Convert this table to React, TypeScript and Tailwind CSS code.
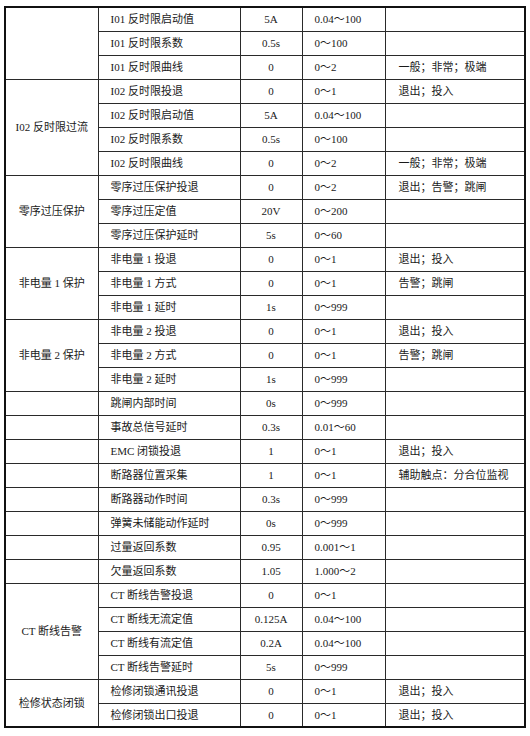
import React from 'react';

type Row = {
  group?: { label: string; span: number };
  name: string;
  value: string;
  range: string;
  note?: string;
};

const rows: Row[] = [
  { group: { label: '', span: 3 }, name: 'I01 反时限启动值', value: '5A', range: '0.04～100' },
  { name: 'I01 反时限系数', value: '0.5s', range: '0～100' },
  { name: 'I01 反时限曲线', value: '0', range: '0～2', note: '一般；非常；极端' },
  { group: { label: 'I02 反时限过流', span: 4 }, name: 'I02 反时限投退', value: '0', range: '0～1', note: '退出；投入' },
  { name: 'I02 反时限启动值', value: '5A', range: '0.04～100' },
  { name: 'I02 反时限系数', value: '0.5s', range: '0～100' },
  { name: 'I02 反时限曲线', value: '0', range: '0～2', note: '一般；非常；极端' },
  { group: { label: '零序过压保护', span: 3 }, name: '零序过压保护投退', value: '0', range: '0～2', note: '退出；告警；跳闸' },
  { name: '零序过压定值', value: '20V', range: '0～200' },
  { name: '零序过压保护延时', value: '5s', range: '0～60' },
  { group: { label: '非电量 1 保护', span: 3 }, name: '非电量 1 投退', value: '0', range: '0～1', note: '退出；投入' },
  { name: '非电量 1 方式', value: '0', range: '0～1', note: '告警；跳闸' },
  { name: '非电量 1 延时', value: '1s', range: '0～999' },
  { group: { label: '非电量 2 保护', span: 3 }, name: '非电量 2 投退', value: '0', range: '0～1', note: '退出；投入' },
  { name: '非电量 2 方式', value: '0', range: '0～1', note: '告警；跳闸' },
  { name: '非电量 2 延时', value: '1s', range: '0～999' },
  { group: { label: '', span: 1 }, name: '跳闸内部时间', value: '0s', range: '0～999' },
  { group: { label: '', span: 1 }, name: '事故总信号延时', value: '0.3s', range: '0.01～60' },
  { group: { label: '', span: 1 }, name: 'EMC 闭锁投退', value: '1', range: '0～1', note: '退出；投入' },
  { group: { label: '', span: 1 }, name: '断路器位置采集', value: '1', range: '0～1', note: '辅助触点：分合位监视' },
  { group: { label: '', span: 1 }, name: '断路器动作时间', value: '0.3s', range: '0～999' },
  { group: { label: '', span: 1 }, name: '弹簧未储能动作延时', value: '0s', range: '0～999' },
  { group: { label: '', span: 1 }, name: '过量返回系数', value: '0.95', range: '0.001～1' },
  { group: { label: '', span: 1 }, name: '欠量返回系数', value: '1.05', range: '1.000～2' },
  { group: { label: 'CT 断线告警', span: 4 }, name: 'CT 断线告警投退', value: '0', range: '0～1' },
  { name: 'CT 断线无流定值', value: '0.125A', range: '0.04～100' },
  { name: 'CT 断线有流定值', value: '0.2A', range: '0.04～100' },
  { name: 'CT 断线告警延时', value: '5s', range: '0～999' },
  { group: { label: '检修状态闭锁', span: 2 }, name: '检修闭锁通讯投退', value: '0', range: '0～1', note: '退出；投入' },
  { name: '检修闭锁出口投退', value: '0', range: '0～1', note: '退出；投入' },
];

const cell = 'border border-[#2a2a2a] p-0 align-middle';

export default function App() {
  return (
    <div className="min-h-screen bg-white pt-[6px] pl-[4px] font-['Liberation_Serif','Noto_Sans_CJK_SC',serif] text-[11px] text-[#1a1a1a]">
      <table className="w-[520px] table-fixed border-collapse border-2 border-[#111]">
        <colgroup>
          <col className="w-[93px]" />
          <col className="w-[142px]" />
          <col className="w-[62px]" />
          <col className="w-[83px]" />
          <col className="w-[140px]" />
        </colgroup>
        <tbody>
          {rows.map((r) => (
            <tr key={r.name} className="h-6">
              {r.group && (
                <td rowSpan={r.group.span} className={`${cell} text-center`}>
                  {r.group.label}
                </td>
              )}
              <td className={`${cell} pl-3`}>{r.name}</td>
              <td className={`${cell} text-center`}>{r.value}</td>
              <td className={`${cell} pl-3`}>{r.range}</td>
              <td className={`${cell} pl-[13px]`}>{r.note}</td>
            </tr>
          ))}
        </tbody>
      </table>
    </div>
  );
}
